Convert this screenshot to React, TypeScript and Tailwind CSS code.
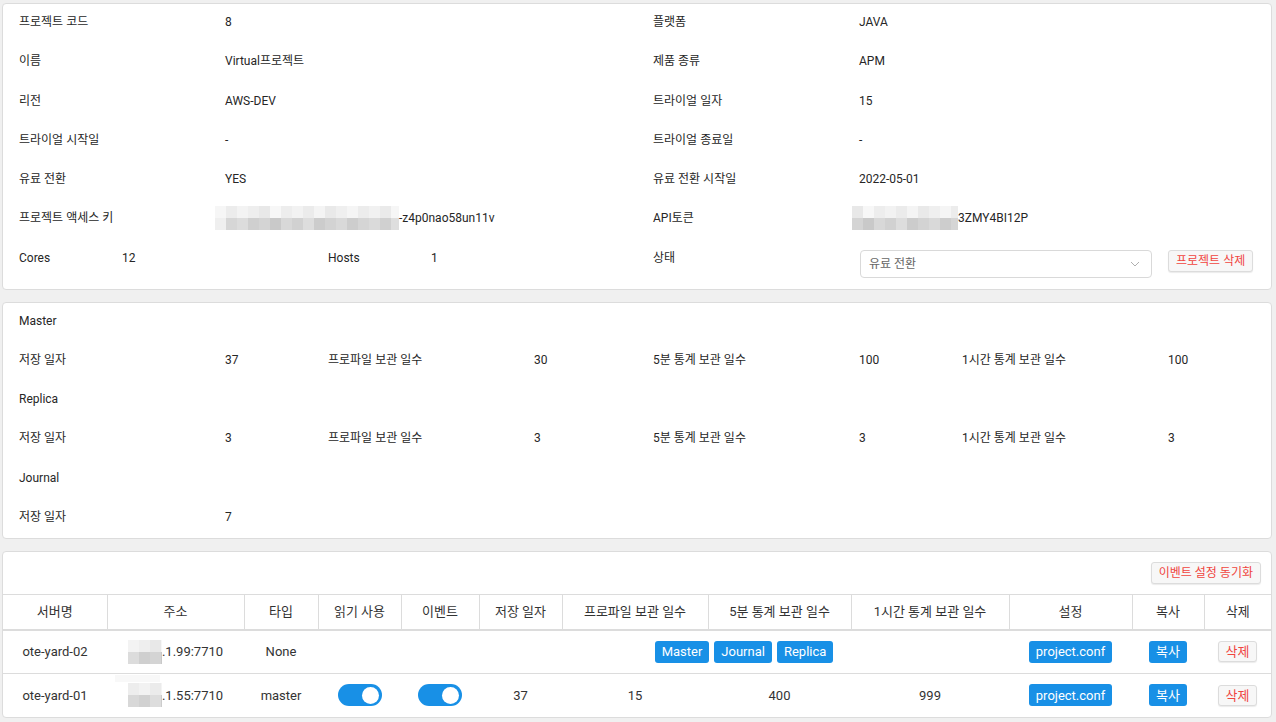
import React from 'react';

const shadesA = [
  ['#f6f6f6', '#ececec', '#f3f3f3', '#eeeeee', '#e8e8e8', '#f7f7f7', '#ededed', '#f2f2f2', '#ebebeb', '#f4f4f4', '#e9e9e9', '#efefef', '#f5f5f5', '#ececec', '#f1f1f1', '#eaeaea', '#f6f6f6'],
  ['#efefef', '#d6d6d6', '#dcdcdc', '#cfcfcf', '#d4d4d4', '#c9c9c9', '#d8d8d8', '#d1d1d1', '#dddddd', '#cccccc', '#d3d3d3', '#d9d9d9', '#cdcdcd', '#d5d5d5', '#dadada', '#d0d0d0', '#dedede'],
];

interface MosaicProps {
  w: number;
  h: number;
  cell: number;
  offset?: number;
}

const Mosaic = ({ w, h, cell, offset = 0 }: MosaicProps) => {
  const cols = Math.ceil(w / cell);
  const rowH = h / 2;
  return (
    <svg width={w} height={h} className="block shrink-0">
      {[0, 1].map((r) =>
        Array.from({ length: cols }).map((_, c) => (
          <rect
            key={`${r}-${c}`}
            x={c * cell}
            y={r * rowH}
            width={cell}
            height={rowH}
            fill={shadesA[r][(c + offset) % shadesA[r].length]}
          />
        ))
      )}
    </svg>
  );
};

const Row = ({ label, children }: { label: string; children?: React.ReactNode }) => (
  <div className="flex h-[20px] items-center">
    <span className="w-[206px] shrink-0">{label}</span>
    <div className="flex items-center">{children}</div>
  </div>
);

const Quad = ({ items }: { items: [string, string][] }) => (
  <div className="grid w-[618px] grid-cols-[206px_103px_206px_103px]">
    {items.map(([l, v]) => (
      <React.Fragment key={l}>
        <span>{l}</span>
        <span>{v}</span>
      </React.Fragment>
    ))}
  </div>
);

const StatRow = ({ a, b }: { a: [string, string][]; b: [string, string][] }) => (
  <div className="flex h-[20px] items-center gap-4">
    <Quad items={a} />
    <Quad items={b} />
  </div>
);

const BlueBtn = ({ children }: { children: React.ReactNode }) => (
  <span className="inline-flex h-[22px] items-center rounded-[3px] bg-[#1890e6] px-[7px] text-[13px] text-white">
    {children}
  </span>
);

const RedBtn = ({ children, className = '' }: { children: React.ReactNode; className?: string }) => (
  <span
    className={`inline-flex items-center rounded-[3px] border border-[#dcdcdc] bg-[#f7f7f7] px-[7px] text-[#f0453f] shadow-[0_1px_1px_rgba(0,0,0,0.08)] ${className}`}
  >
    {children}
  </span>
);

const Toggle = () => (
  <span className="inline-flex h-[22px] w-[44px] items-center justify-end rounded-full bg-[#1890e6] px-[3px]">
    <span className="h-[17px] w-[17px] rounded-full bg-white" />
  </span>
);

const cols = [104, 137, 74, 83, 78, 83, 146, 143, 158, 123, 72, 67];
const heads = ['서버명', '주소', '타입', '읽기 사용', '이벤트', '저장 일자', '프로파일 보관 일수', '5분 통계 보관 일수', '1시간 통계 보관 일수', '설정', '복사', '삭제'];

export default function App() {
  return (
    <div className="min-h-[722px] bg-[#f0f0f0] pl-[2px] pt-[3px] font-[Roboto,'Noto_Sans_CJK_KR',sans-serif] text-[12px] text-[#262626] [font-feature-settings:'palt']">
      {/* project info */}
      <div className="w-[1270px] rounded-[4px] border border-[#dcdcdc] bg-white pb-[11px] pl-4 pt-[8px]">
        <div className="flex gap-4">
          <div className="flex w-[618px] flex-col gap-[19.3px]">
            <Row label="프로젝트 코드">8</Row>
            <Row label="이름">Virtual프로젝트</Row>
            <Row label="리전">AWS-DEV</Row>
            <Row label="트라이얼 시작일">-</Row>
            <Row label="유료 전환">YES</Row>
            <div className="flex h-[20px] items-center">
              <span className="w-[196px] shrink-0">프로젝트 액세스 키</span>
              <div className="-my-[2px] flex items-center">
                <Mosaic w={184} h={24} cell={11} />
                <span>-z4p0nao58un11v</span>
              </div>
            </div>
            <div className="grid h-[30px] grid-cols-[103px_206px_103px_206px]">
              <span className="leading-[20px]">Cores</span>
              <span className="leading-[20px]">12</span>
              <span className="leading-[20px]">Hosts</span>
              <span className="leading-[20px]">1</span>
            </div>
          </div>
          <div className="flex w-[618px] flex-col gap-[19.3px]">
            <Row label="플랫폼">JAVA</Row>
            <Row label="제품 종류">APM</Row>
            <Row label="트라이얼 일자">15</Row>
            <Row label="트라이얼 종료일">-</Row>
            <Row label="유료 전환 시작일">2022-05-01</Row>
            <div className="flex h-[20px] items-center">
              <span className="w-[199px] shrink-0">API토큰</span>
              <div className="-my-[2px] flex items-center">
                <Mosaic w={106} h={24} cell={11} offset={4} />
                <span>3ZMY4BI12P</span>
              </div>
            </div>
            <div className="flex h-[30px] items-start">
              <span className="w-[207px] shrink-0 leading-[20px]">상태</span>
              <div className="mt-[2px] flex h-[28px] w-[292px] items-center justify-between rounded-[4px] border border-[#d9d9d9] bg-white pl-[8px] pr-[11px] text-[12px] text-[#666]">
                <span>유료 전환</span>
                <svg width="10" height="6" viewBox="0 0 10 6" fill="none" stroke="#b0b0b0" strokeWidth="1">
                  <path d="M1 1l4 4 4-4" />
                </svg>
              </div>
              <RedBtn className="ml-[16px] mt-[2px] h-[22px] text-[12px]">프로젝트 삭제</RedBtn>
            </div>
          </div>
        </div>
      </div>

      {/* retention */}
      <div className="mt-[12px] flex w-[1270px] flex-col gap-[19.2px] rounded-[4px] border border-[#dcdcdc] bg-white pb-[11px] pl-4 pt-[8px]">
        <div className="h-[20px] leading-[20px]">Master</div>
        <StatRow
          a={[['저장 일자', '37'], ['프로파일 보관 일수', '30']]}
          b={[['5분 통계 보관 일수', '100'], ['1시간 통계 보관 일수', '100']]}
        />
        <div className="h-[20px] leading-[20px]">Replica</div>
        <StatRow
          a={[['저장 일자', '3'], ['프로파일 보관 일수', '3']]}
          b={[['5분 통계 보관 일수', '3'], ['1시간 통계 보관 일수', '3']]}
        />
        <div className="h-[20px] leading-[20px]">Journal</div>
        <StatRow a={[['저장 일자', '7']]} b={[]} />
      </div>

      {/* servers */}
      <div className="mt-[12px] w-[1270px] overflow-hidden rounded-[4px] border border-[#dcdcdc] bg-white text-[13px] text-[#333]">
        <div className="flex h-[42px] items-center justify-end pr-[10px]">
          <RedBtn className="h-[22px] text-[12px]">이벤트 설정 동기화</RedBtn>
        </div>
        <table className="w-full table-fixed border-collapse">
          <colgroup>
            {cols.map((w, i) => (
              <col key={i} style={{ width: w }} />
            ))}
          </colgroup>
          <thead>
            <tr className="h-[36px] border-b-2 border-t border-[#dcdcdc]">
              {heads.map((h, i) => (
                <th
                  key={h}
                  className={`text-center font-normal ${i < heads.length - 1 ? 'border-r border-[#dcdcdc]' : ''}`}
                >
                  {h}
                </th>
              ))}
            </tr>
          </thead>
          <tbody>
            <tr className="h-[43px] border-b border-[#dcdcdc] text-center">
              <td>ote-yard-02</td>
              <td>
                <div className="flex items-center justify-center">
                  <Mosaic w={34} h={24} cell={11} offset={2} />
                  <span>.1.99:7710</span>
                </div>
              </td>
              <td>None</td>
              <td />
              <td />
              <td colSpan={4}>
                <div className="flex items-center justify-center gap-[5px]">
                  <BlueBtn>Master</BlueBtn>
                  <BlueBtn>Journal</BlueBtn>
                  <BlueBtn>Replica</BlueBtn>
                </div>
              </td>
              <td>
                <BlueBtn>project.conf</BlueBtn>
              </td>
              <td>
                <BlueBtn>복사</BlueBtn>
              </td>
              <td>
                <RedBtn className="h-[21px] text-[13px]">삭제</RedBtn>
              </td>
            </tr>
            <tr className="h-[44px] text-center">
              <td>ote-yard-01</td>
              <td>
                <div className="relative flex items-center justify-center">
                  <span className="absolute left-[8px] top-[-8px] h-[7px] w-[45px] bg-[#f8f8f8]" />
                  <Mosaic w={34} h={24} cell={11} offset={6} />
                  <span>.1.55:7710</span>
                </div>
              </td>
              <td>master</td>
              <td>
                <div className="flex justify-center">
                  <Toggle />
                </div>
              </td>
              <td>
                <div className="flex justify-center">
                  <Toggle />
                </div>
              </td>
              <td>37</td>
              <td>15</td>
              <td>400</td>
              <td>999</td>
              <td>
                <BlueBtn>project.conf</BlueBtn>
              </td>
              <td>
                <BlueBtn>복사</BlueBtn>
              </td>
              <td>
                <RedBtn className="h-[21px] text-[13px]">삭제</RedBtn>
              </td>
            </tr>
          </tbody>
        </table>
      </div>
    </div>
  );
}
